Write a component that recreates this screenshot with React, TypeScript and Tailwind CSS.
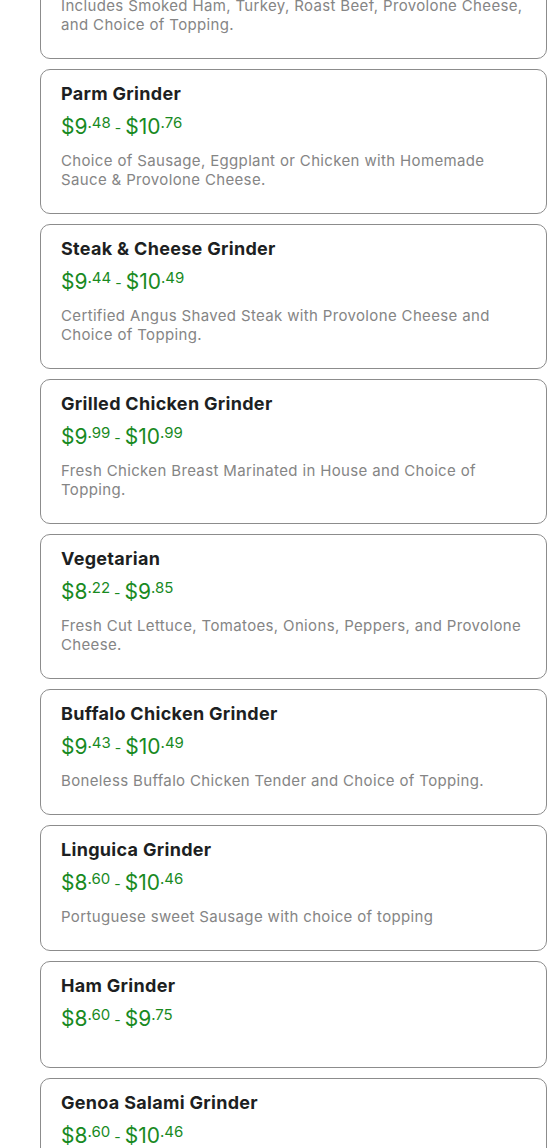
import React from 'react';

type Item = {
    name: string;
    low: [string, string];
    high: [string, string];
    desc?: string;
};

const ITEMS: Item[] = [
    { name: 'Italian Grinder', low: ['9', '48'], high: ['10', '76'], desc: 'Includes Smoked Ham, Turkey, Roast Beef, Provolone Cheese, and Choice of Topping.' },
    { name: 'Parm Grinder', low: ['9', '48'], high: ['10', '76'], desc: 'Choice of Sausage, Eggplant or Chicken with Homemade Sauce & Provolone Cheese.' },
    { name: 'Steak & Cheese Grinder', low: ['9', '44'], high: ['10', '49'], desc: 'Certified Angus Shaved Steak with Provolone Cheese and Choice of Topping.' },
    { name: 'Grilled Chicken Grinder', low: ['9', '99'], high: ['10', '99'], desc: 'Fresh Chicken Breast Marinated in House and Choice of Topping.' },
    { name: 'Vegetarian', low: ['8', '22'], high: ['9', '85'], desc: 'Fresh Cut Lettuce, Tomatoes, Onions, Peppers, and Provolone Cheese.' },
    { name: 'Buffalo Chicken Grinder', low: ['9', '43'], high: ['10', '49'], desc: 'Boneless Buffalo Chicken Tender and Choice of Topping.' },
    { name: 'Linguica Grinder', low: ['8', '60'], high: ['10', '46'], desc: 'Portuguese sweet Sausage with choice of topping' },
    { name: 'Ham Grinder', low: ['8', '60'], high: ['9', '75'] },
    { name: 'Genoa Salami Grinder', low: ['8', '60'], high: ['10', '46'], desc: 'Genoa Salami, Provolone Cheese and Choice of Topping.' },
];

const Price: React.FC<{ p: [string, string] }> = ({ p }) => (
    <span className="inline-flex items-start">
        <span className="text-[21px] leading-[28px]">${p[0]}</span>
        <span className="text-[15px] leading-[20px]">.{p[1]}</span>
    </span>
);

const Card: React.FC<{ item: Item; first?: boolean }> = ({ item, first }) => (
    <div className={`rounded-[10px] border border-[#8c8c8c] bg-white px-5 pt-3 pb-6 ${first ? '-mt-[86px]' : ''}`}>
        <h3 className="text-[18px] leading-6 font-bold tracking-[0.3px] text-[#1d1f22]">{item.name}</h3>
        <div className="mt-[7px] flex h-[28px] items-start text-[#198a1f]">
            <Price p={item.low} />
            <span className="mx-[4px] mt-[5px] text-[14px] leading-[20px]">-</span>
            <Price p={item.high} />
        </div>
        <p className="mt-[10px] text-[15px] leading-[19px] tracking-[0.35px] text-[#858585]">{item.desc}</p>
    </div>
);

export default function App() {
    return (
        <div
            className="h-[1148px] overflow-hidden bg-white pl-10 pr-[10px]"
            style={{ fontFamily: 'Inter, "Noto Sans", sans-serif' }}
        >
            <div className="flex flex-col gap-[10px]">
                {ITEMS.map((item, i) => (
                    <Card key={item.name} item={item} first={i === 0} />
                ))}
            </div>
        </div>
    );
}
